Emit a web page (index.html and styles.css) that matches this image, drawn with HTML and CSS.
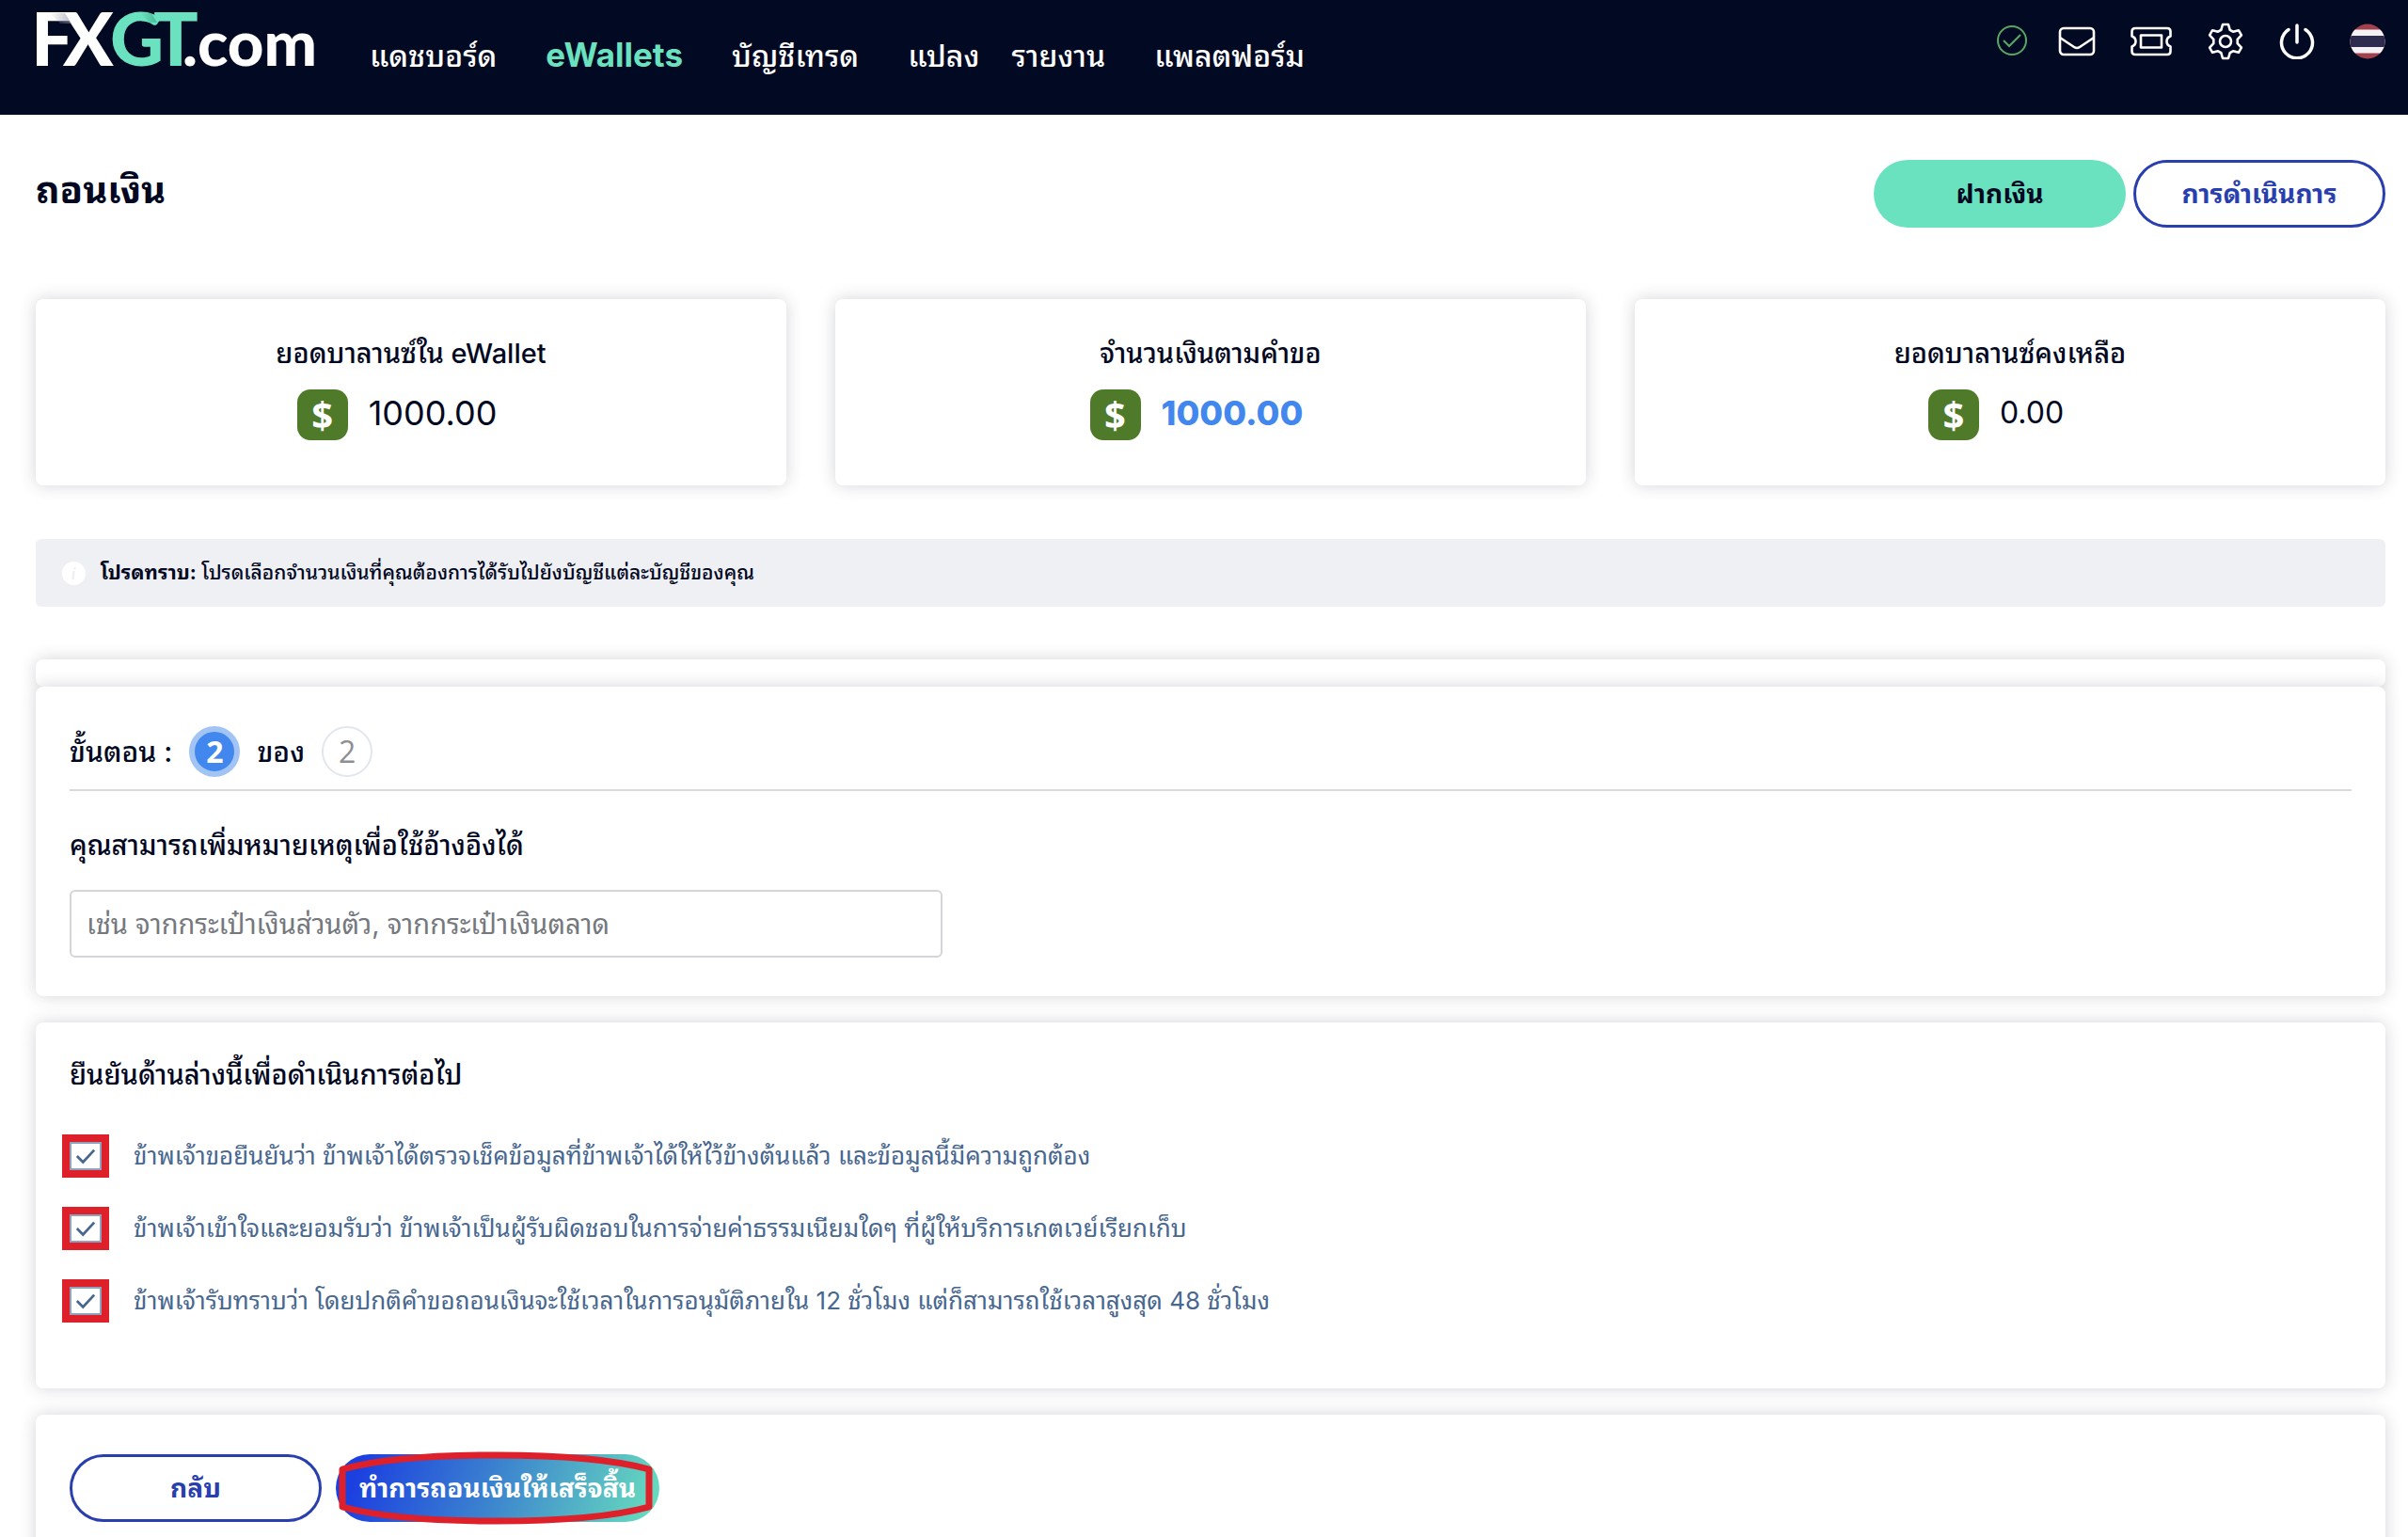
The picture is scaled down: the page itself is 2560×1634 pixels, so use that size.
FILE: index.html
```html
<!DOCTYPE html>
<html lang="th">
<head>
<meta charset="utf-8">
<meta name="viewport" content="width=device-width, initial-scale=1">
<title>FXGT.com – ถอนเงิน</title>
<link rel="stylesheet" href="styles.css">
</head>
<body>
<header class="topbar">
  <a class="logo" href="#" aria-label="FXGT.com">
    <svg width="309" height="64" viewBox="0 0 309 64">
      <defs>
        <linearGradient id="fold"><stop offset="0" stop-color="#8e90a0" stop-opacity="0"/><stop offset="1" stop-color="#8e90a0" stop-opacity="0.6"/></linearGradient>
        <linearGradient id="fold-green"><stop offset="0" stop-color="#2f9f82" stop-opacity="0"/><stop offset="1" stop-color="#2f9f82" stop-opacity="0.6"/></linearGradient>
      </defs>
      <text class="logo-big" x="0 34 84 130" y="60"><tspan fill="#fff">FX</tspan><tspan fill="#6ae2bf">GT</tspan></text>
      <path d="M20 4h16l7 11h-12z" fill="url(#fold)"/>
      <path d="M116 4h12l6 10h-8z" fill="url(#fold-green)"/>
      <text class="logo-small" x="161" y="60" fill="#fff">.com</text>
    </svg>
  </a>
  <nav class="nav">
    <a href="#">แดชบอร์ด</a>
    <a href="#" class="active">eWallets</a>
    <a href="#">บัญชีเทรด</a>
    <span class="nav-pair"><a href="#">แปลง</a><a href="#">รายงาน</a></span>
    <a href="#">แพลตฟอร์ม</a>
  </nav>
  <div class="tools">
    <button class="tool tool-status" aria-label="สถานะ"><svg width="34" height="34" viewBox="0 0 34 34" fill="none" stroke="#58a865" stroke-width="2"><circle cx="17" cy="16" r="15"/><path d="M8 16l6 6 12-12"/></svg></button>
    <button class="tool" aria-label="ข้อความ"><svg width="40" height="40" viewBox="0 0 40 40" fill="none" stroke="#fff" stroke-width="2.600" stroke-linejoin="round"><rect x="2" y="6" width="36" height="28" rx="4"/><path d="M2 16l15 10q3 2 6 0l15-10"/></svg></button>
    <button class="tool" aria-label="คูปอง"><svg width="44" height="40" viewBox="0 0 44 40" fill="none" stroke="#fff" stroke-width="2.600" stroke-linejoin="round"><path d="M5 6h34q3.500 0 3.500 3.500v5q-4 1.500-4 5.500t4 5.500v5q0 3.500-3.500 3.500H5q-3.500 0-3.500-3.500v-5q4-1.500 4-5.500t-4-5.500v-5Q1.500 6 5 6z"/><rect x="11" y="13.500" width="22" height="13"/></svg></button>
    <button class="tool" aria-label="ตั้งค่า"><svg width="40" height="40" viewBox="0 0 40 40" fill="none" stroke="#fff" stroke-width="2.600" stroke-linejoin="round"><path d="M17 2h6l1.700 5.800 3.300 1.900 5.900-1.500 3 5.200-4.200 4.400v4.400l4.200 4.400-3 5.200-5.900-1.500-3.300 1.900L23 38h-6l-1.700-5.800-3.300-1.900-5.900 1.500-3-5.200 4.200-4.400v-4.400l-4.200-4.400 3-5.200 5.900 1.500 3.300-1.900z"/><circle cx="20" cy="20" r="6"/></svg></button>
    <button class="tool" aria-label="ออกจากระบบ"><svg width="38" height="38" viewBox="0 0 38 38" fill="none" stroke="#fff" stroke-width="3.500" stroke-linecap="round"><path d="M10 6.500a16.500 16.500 0 1 0 18 0M19 2v18"/></svg></button>
    <button class="tool" aria-label="ภาษาไทย"><svg width="38" height="38" viewBox="0 0 38 38"><clipPath id="disc"><circle cx="19" cy="19" r="18.500"/></clipPath><g clip-path="url(#disc)"><path fill="#a2414e" d="M0 0h38v38H0z"/><path fill="#f3f1f5" d="M0 6.500h38v25H0z"/><path fill="#2d2c4f" d="M0 13h38v12H0z"/></g></svg></button>
  </div>
</header>

<main class="page">
  <div class="heading">
    <h1>ถอนเงิน</h1>
    <div class="heading-actions">
      <button class="btn btn-mint">ฝากเงิน</button>
      <button class="btn btn-outline">การดำเนินการ</button>
    </div>
  </div>

  <section class="balances">
    <article class="card balance">
      <h2>ยอดบาลานซ์ใน eWallet</h2>
      <p class="amount"><span class="coin">$</span><span class="value">1000.00</span></p>
    </article>
    <article class="card balance">
      <h2>จำนวนเงินตามคำขอ</h2>
      <p class="amount"><span class="coin">$</span><span class="value value-blue">1000.00</span></p>
    </article>
    <article class="card balance">
      <h2>ยอดบาลานซ์คงเหลือ</h2>
      <p class="amount"><span class="coin">$</span><span class="value value-light">0.00</span></p>
    </article>
  </section>

  <p class="notice">
    <svg width="25" height="25" viewBox="0 0 25 25"><circle cx="12.500" cy="12.500" r="12.500" fill="#fff"/><path d="M13.500 7v.5M12.500 11l-1 7" stroke="#eff0f4" stroke-width="2.500" stroke-linecap="round"/></svg>
    <span><b>โปรดทราบ:</b> โปรดเลือกจำนวนเงินที่คุณต้องการได้รับไปยังบัญชีแต่ละบัญชีของคุณ</span>
  </p>

  <form class="steps">
    <div class="card stub"></div>
    <section class="card panel note-panel">
      <div class="stepper">
        <span>ขั้นตอน :</span><span class="dot dot-on">2</span><span>ของ</span><span class="dot">2</span>
      </div>
      <label class="label" for="note">คุณสามารถเพิ่มหมายเหตุเพื่อใช้อ้างอิงได้</label>
      <input class="field" id="note" type="text" placeholder="เช่น จากกระเป๋าเงินส่วนตัว, จากกระเป๋าเงินตลาด">
    </section>

    <section class="card panel confirm-panel">
      <h2 class="label">ยืนยันด้านล่างนี้เพื่อดำเนินการต่อไป</h2>
      <label class="check"><input type="checkbox" checked><span>ข้าพเจ้าขอยืนยันว่า ข้าพเจ้าได้ตรวจเช็คข้อมูลที่ข้าพเจ้าได้ให้ไว้ข้างต้นแล้ว และข้อมูลนี้มีความถูกต้อง</span></label>
      <label class="check"><input type="checkbox" checked><span>ข้าพเจ้าเข้าใจและยอมรับว่า ข้าพเจ้าเป็นผู้รับผิดชอบในการจ่ายค่าธรรมเนียมใดๆ ที่ผู้ให้บริการเกตเวย์เรียกเก็บ</span></label>
      <label class="check"><input type="checkbox" checked><span>ข้าพเจ้ารับทราบว่า โดยปกติคำขอถอนเงินจะใช้เวลาในการอนุมัติภายใน 12 ชั่วโมง แต่ก็สามารถใช้เวลาสูงสุด 48 ชั่วโมง</span></label>
    </section>

    <section class="card panel actions">
      <button type="button" class="btn btn-outline">กลับ</button>
      <div class="submit-wrap">
        <button type="submit" class="btn btn-gradient">ทำการถอนเงินให้เสร็จสิ้น</button>
        <svg class="ring" viewBox="0 0 334 78" fill="none" stroke="#de202b" stroke-linejoin="round"><path stroke-width="7" d="M4 19C44 8 100 4 167 4s123 4 163 15v40c-40 11-96 15-163 15S44 70 4 59z"/></svg>
      </div>
    </section>
  </form>
</main>
</body>
</html>
```
FILE: styles.css
```css
* { box-sizing: border-box; }

body {
  margin: 0;
  background: #fff;
  color: #02081f;
  font-family: Inter, "Noto Sans Thai Looped", Loma, Garuda, Waree, sans-serif;
  font-size: 28px;
  line-height: 40px;
}

h1, h2, p { margin: 0; font-weight: 500; }
a { color: inherit; text-decoration: none; }
button { font: inherit; cursor: pointer; }

.topbar {
  display: flex;
  align-items: flex-start;
  height: 122px;
  padding: 10px 24px 0 33px;
  background: #020922;
  color: #fff;
}
.logo svg { display: block; overflow: visible; }
.logo-big { font: 900 79px Lato, sans-serif; }
.logo-small { font: 900 67px Lato, sans-serif; }

.nav {
  display: flex;
  align-items: baseline;
  gap: 52px;
  padding-top: 28px;
  margin-left: 51px;
  font-size: 32px;
  font-weight: 500;
}
.nav-pair { display: flex; gap: 34px; }
.active { color: #6ae2bf; font-weight: 700; font-size: 35px; }

.tools {
  display: flex;
  align-items: center;
  gap: 37px;
  margin-left: auto;
  padding-top: 14px;
}
.tool { display: block; padding: 0; border: 0; background: none; }
.tool-status { margin-right: -5px; }
.tool svg { display: block; }

.page { padding: 48px 24px 0 38px; }

.heading { display: flex; justify-content: space-between; align-items: flex-start; height: 148px; }
h1 { padding-top: 8px; font-size: 40px; line-height: 48px; font-weight: 700; }
.heading-actions { display: flex; gap: 8px; }

.btn {
  min-width: 268px;
  height: 72px;
  padding: 0 24px;
  border: 0;
  border-radius: 36px;
  font-weight: 700;
  white-space: nowrap;
}
.btn-mint { background: #6ae2bf; color: #02081f; }
.btn-outline { border: 3px solid #2a3fae; background: #fff; color: #2a3fae; }
.btn-gradient { width: 344px; color: #fff; background: linear-gradient(110deg, #1c40e0 8%, #3b82cf 48%, #66d9be 96%); }

.card { border-radius: 8px; background: #fff; box-shadow: 0 0 18px rgba(40, 44, 70, 0.2); }

.balances { display: grid; grid-template-columns: repeat(3, 1fr); gap: 52px; }
.balance { height: 198px; padding-top: 38px; text-align: center; }
.balance h2 { font-size: 29px; }
.amount { display: flex; justify-content: center; align-items: center; gap: 22px; padding: 18px 30px 0 0; }
.coin { width: 54px; height: 54px; border-radius: 14px; background: #4f7a29; color: #fff; font: 700 40px/54px "Open Sans", sans-serif; }
.value { padding-bottom: 4px; font-size: 36px; font-weight: 400; }
.value-blue { color: #4187ee; font-weight: 800; }
.value-light { font-size: 32px; }

.notice {
  display: flex;
  align-items: center;
  gap: 16px;
  height: 72px;
  margin: 57px 0 56px;
  padding: 0 28px;
  border-radius: 6px;
  background: #eff0f4;
  font-size: 21px;
}

.stub { height: 29px; }
.panel { padding: 0 36px; }
.note-panel { height: 329px; }
.stepper {
  display: flex;
  align-items: center;
  gap: 18px;
  height: 111px;
  padding-top: 28px;
  border-bottom: 2px solid #d9dadd;
  font-size: 30px;
  font-weight: 500;
}
.dot { width: 54px; height: 54px; border: 2px solid #e2e7ee; border-radius: 50%; color: #8d8f94; font: 400 32px/50px "Open Sans", sans-serif; text-align: center; }
.dot-on { border: 6px solid #a2c4f5; background: #4187ee; color: #fff; font-weight: 700; line-height: 42px; }
.label { display: block; font-size: 29px; font-weight: 500; }
.note-panel .label { padding: 38px 0 27px; }
.field {
  display: block;
  width: 928px;
  max-width: 100%;
  height: 72px;
  padding: 0 16px;
  border: 2px solid #d3d5d9;
  border-radius: 6px;
  font: inherit;
  font-size: 29px;
}
.field::placeholder { color: #75787d; opacity: 1; }

.confirm-panel { height: 389px; margin-top: 28px; padding-top: 36px; }
.confirm-panel h2 { margin-bottom: 46px; }
.check { display: flex; align-items: center; gap: 34px; margin-bottom: 37px; color: #48678f; font-size: 26px; }
.check input {
  appearance: none;
  flex: none;
  width: 34px;
  height: 30px;
  margin: 0;
  border: 2px solid #8fa3bd;
  outline: 8px solid #de202b;
  background: #fff url("data:image/svg+xml,%3Csvg xmlns='http://www.w3.org/2000/svg' viewBox='0 0 24 20' fill='none' stroke='%2348678f' stroke-width='3'%3E%3Cpath d='M2 10l7 7L22 3'/%3E%3C/svg%3E") center / 22px 20px no-repeat;
}

.actions { display: flex; gap: 15px; height: 150px; margin-top: 28px; padding-top: 42px; border-radius: 8px 8px 0 0; }
.submit-wrap { position: relative; }
.ring { position: absolute; left: 3px; top: -3px; width: 334px; height: 78px; pointer-events: none; }
```
